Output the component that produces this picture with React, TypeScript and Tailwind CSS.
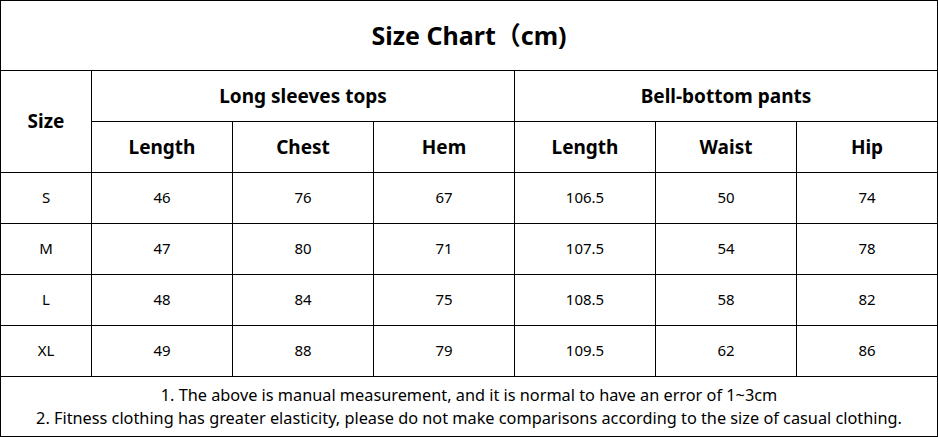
import React from "react";

const font = { fontFamily: '"Noto Sans", "Noto Sans CJK SC", sans-serif' };

const rows = [
  ["S", "46", "76", "67", "106.5", "50", "74"],
  ["M", "47", "80", "71", "107.5", "54", "78"],
  ["L", "48", "84", "75", "108.5", "58", "82"],
  ["XL", "49", "88", "79", "109.5", "62", "86"],
];

const cell = "border-r border-b border-black flex items-center justify-center";

export default function App() {
  return (
    <div className="w-[938px] h-[437px] bg-white text-black" style={font}>
      <div className="grid grid-cols-[91px_141px_141px_141px_141px_141px_141px] grid-rows-[70px_51px_51px_51px_51px_51px_51px_60px] border-l border-t border-black w-[938px]">
        <div className={`${cell} col-span-7 text-[25px] font-bold`}>Size Chart（cm)</div>
        <div className={`${cell} row-span-2 text-[19px] font-bold`}>Size</div>
        <div className={`${cell} col-span-3 text-[19px] font-bold`}>Long sleeves tops</div>
        <div className={`${cell} col-span-3 text-[19px] font-bold`}>Bell-bottom pants</div>
        {["Length", "Chest", "Hem", "Length", "Waist", "Hip"].map((h, i) => (
          <div key={i} className={`${cell} text-[19px] font-bold`}>{h}</div>
        ))}
        {rows.map((r, ri) =>
          r.map((c, ci) => (
            <div key={`${ri}-${ci}`} className={`${cell} text-[15px] pb-[2px]`}>{c}</div>
          ))
        )}
        <div className={`${cell} col-span-7 flex-col text-[16.3px] leading-[23px]`}>
          <div>1. The above is manual measurement, and it is normal to have an error of 1~3cm</div>
          <div>2. Fitness clothing has greater elasticity, please do not make comparisons according to the size of casual clothing.</div>
        </div>
      </div>
    </div>
  );
}
